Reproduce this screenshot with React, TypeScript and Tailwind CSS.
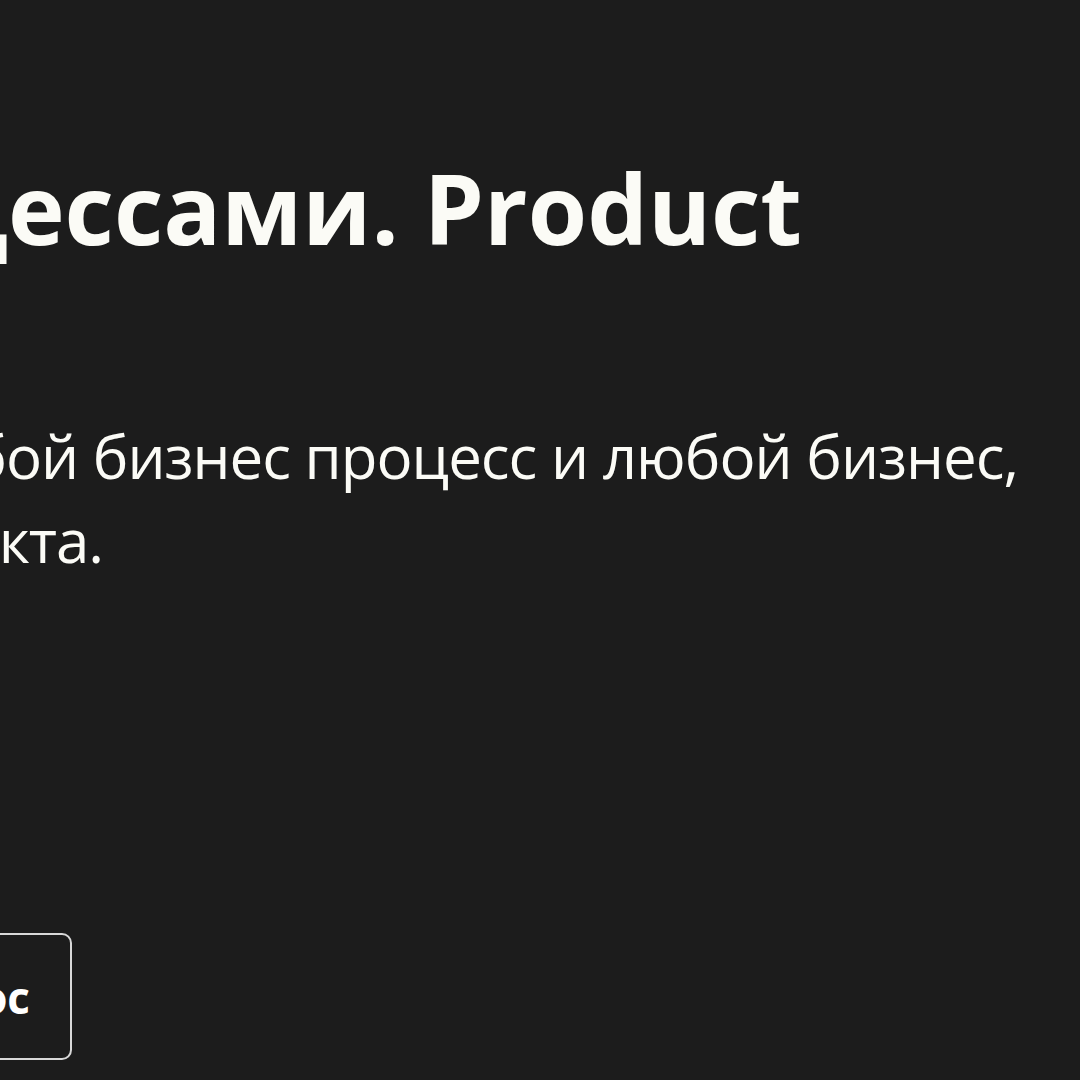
import React from "react";

export default function App() {
  return (
    <div
      className="w-[1080px] h-[1080px] overflow-hidden bg-[#1c1c1c] text-[#fbfbf6] flex flex-col"
      style={{ fontFamily: '"Open Sans", "Noto Sans", sans-serif' }}
    >
      <div className="pt-[160px] w-[802px] flex justify-end">
        <h1 className="shrink-0 whitespace-nowrap text-[96px] leading-[96px] font-bold">
          Управление процессами. Product
        </h1>
      </div>
      <div className="mt-[158px] flex flex-col text-[60px] leading-[84px] tracking-[-1px]">
        <div className="w-[1018px] flex justify-end">
          <span className="shrink-0 whitespace-nowrap">Опишите любой бизнес процесс и любой бизнес,</span>
        </div>
        <div className="w-[103px] flex justify-end">
          <span className="shrink-0 whitespace-nowrap">функцию вашего продукта.</span>
        </div>
      </div>
      <div className="mt-[351px] w-[72px] flex justify-end">
        <button className="shrink-0 whitespace-nowrap h-[127px] pl-[40px] pr-[40px] rounded-[10px] border-2 border-[#d8d8d8] text-[44px] font-bold text-white flex items-center">
          Задать вопрос
        </button>
      </div>
    </div>
  );
}
